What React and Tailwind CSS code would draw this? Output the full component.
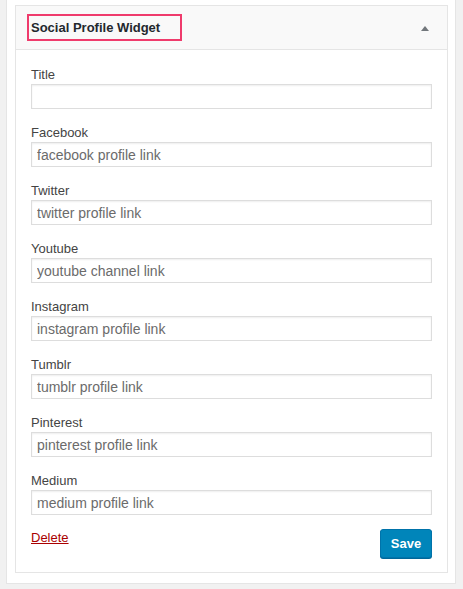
import React from 'react';

const fields = [
  { label: 'Title', placeholder: '' },
  { label: 'Facebook', placeholder: 'facebook profile link' },
  { label: 'Twitter', placeholder: 'twitter profile link' },
  { label: 'Youtube', placeholder: 'youtube channel link' },
  { label: 'Instagram', placeholder: 'instagram profile link' },
  { label: 'Tumblr', placeholder: 'tumblr profile link' },
  { label: 'Pinterest', placeholder: 'pinterest profile link' },
  { label: 'Medium', placeholder: 'medium profile link' },
];

function Field({ label, placeholder }) {
  return (
    <div className="flex flex-col">
      <label className="text-[13px] leading-[18px] text-[#444]">{label}</label>
      <input
        type="text"
        placeholder={placeholder}
        className="h-[25px] w-full border border-[#ddd] bg-white px-[5px] text-[14px] text-[#32373c] shadow-[inset_0_1px_2px_rgba(0,0,0,0.07)] outline-none placeholder:text-[#6b6b6b]"
      />
    </div>
  );
}

export default function App() {
  return (
    <div className="h-[589px] w-full bg-[#f1f1f1] font-['Liberation_Sans',Arial,sans-serif]">
      <div className="ml-[6px] w-[450px] border-x border-b border-[#e5e5e5] bg-white pb-[10px] pl-[8px] pr-[7px] pt-[5px]">
        {/* widget box */}
        <div className="border border-[#e5e5e5] bg-white">
          <div className="flex h-[44px] items-center justify-between border-b border-[#e5e5e5] bg-[#f9f9f9] pl-[11px] pr-[18px]">
            <span className="flex h-[27px] w-[155px] items-center border-2 border-[#ef3b6c] px-[2px] text-[13px] font-bold text-[#23282d]">
              Social Profile Widget
            </span>
            <svg width="8" height="5" viewBox="0 0 8 5" className="mt-[1px]">
              <polygon points="4,0 8,5 0,5" fill="#72777c" />
            </svg>
          </div>

          <div className="px-[15px] pb-[14px] pt-[16px]">
            <div className="flex flex-col gap-[15px]">
              {fields.map((f) => (
                <Field key={f.label} label={f.label} placeholder={f.placeholder} />
              ))}
            </div>

            <div className="mt-[14px] flex items-start justify-between">
              <a href="#" className="text-[13px] leading-[18px] text-[#a00] underline">
                Delete
              </a>
              <button className="h-[29px] w-[52px] rounded-[3px] border border-[#0073aa] bg-[#0085ba] text-[13px] font-bold text-white shadow-[0_1px_0_#006799]">
                Save
              </button>
            </div>
          </div>
        </div>
      </div>
    </div>
  );
}
